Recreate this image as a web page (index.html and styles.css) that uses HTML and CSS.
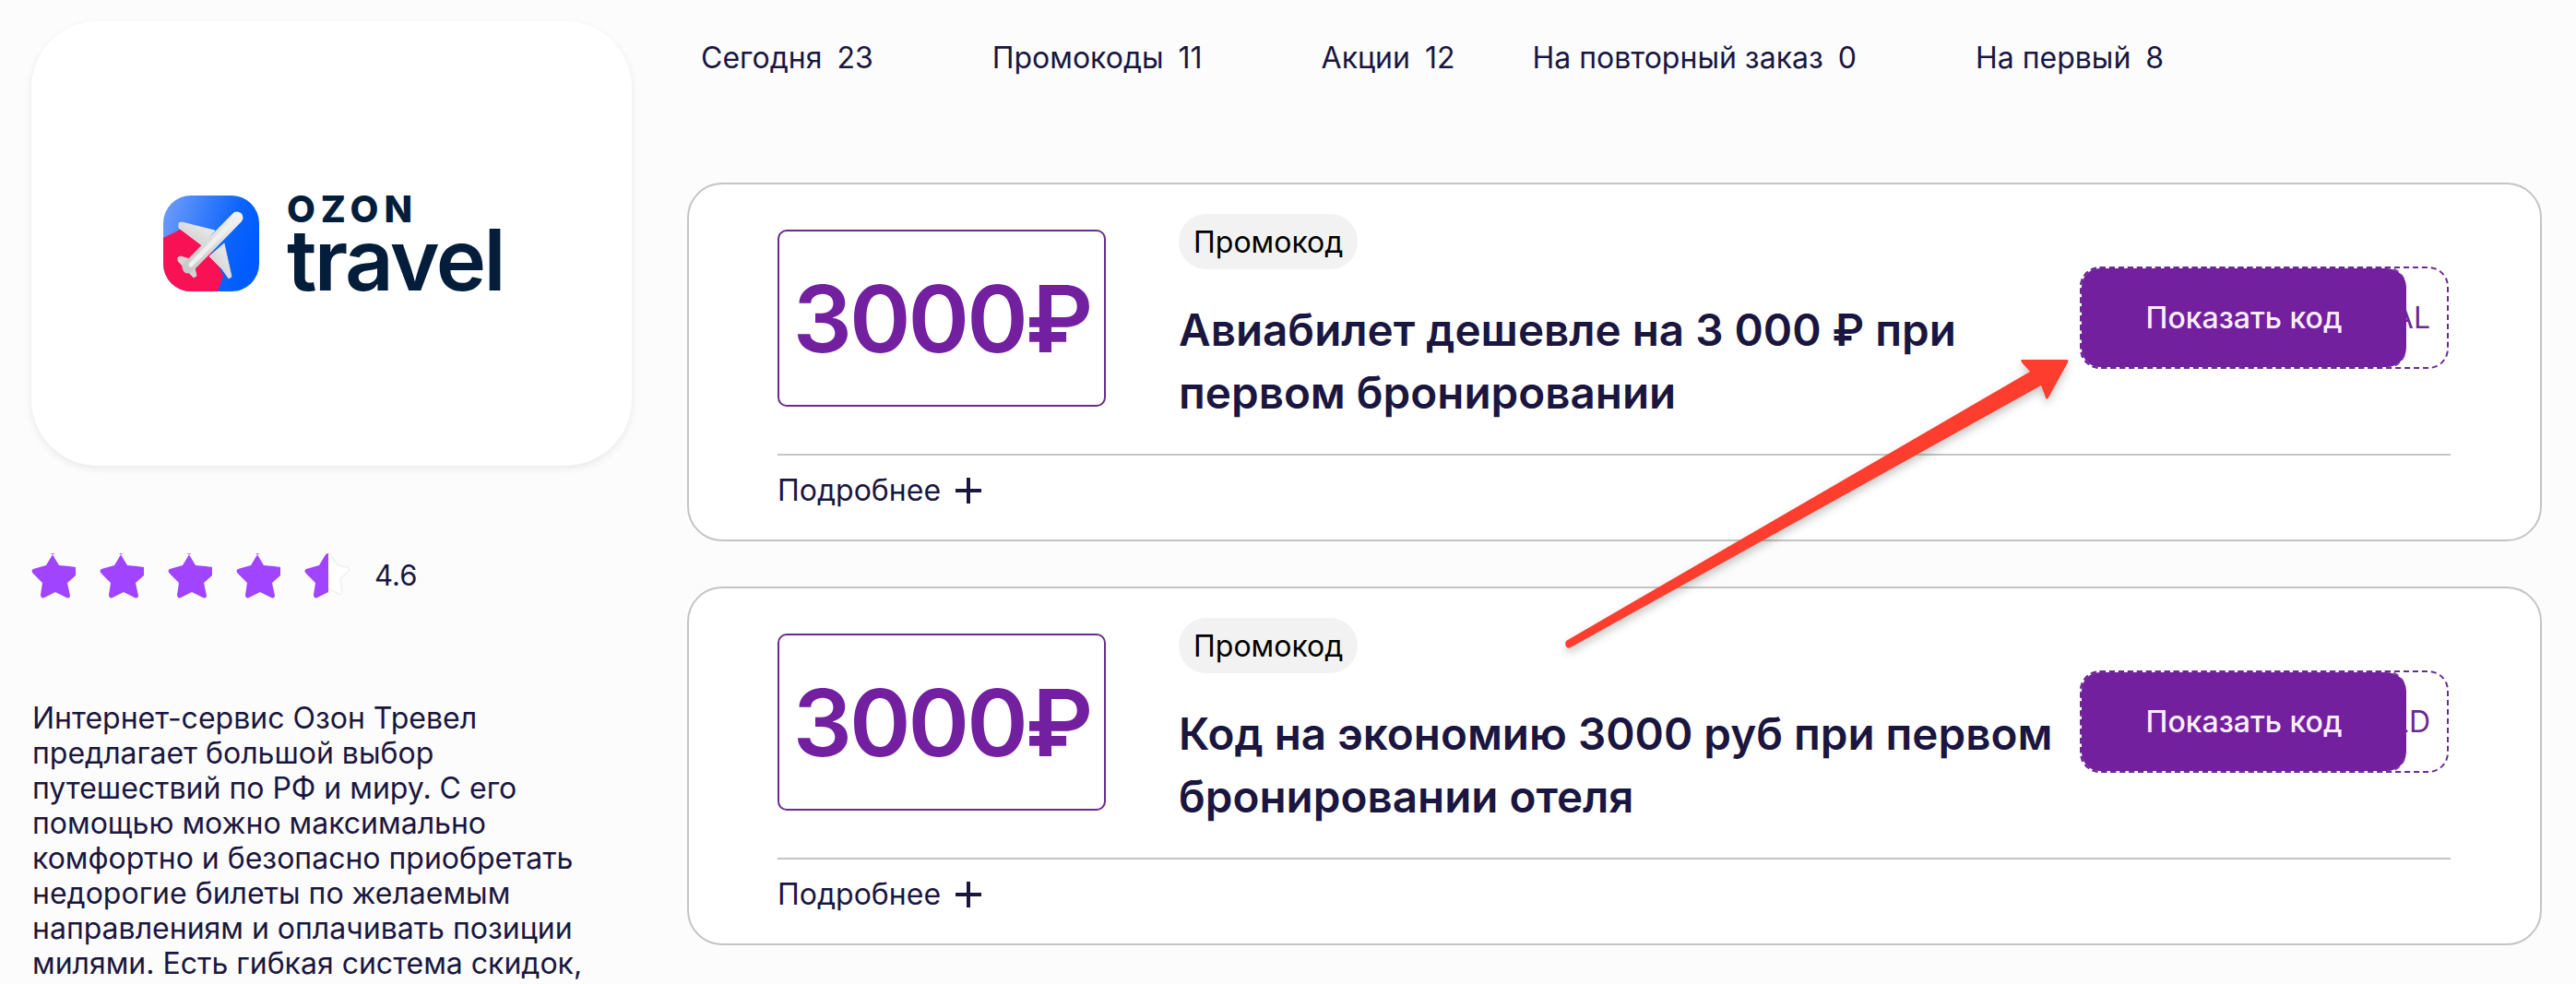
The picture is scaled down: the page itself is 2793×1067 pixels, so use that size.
FILE: index.html
```html
<!DOCTYPE html>
<html lang="ru">
<head>
<meta charset="utf-8">
<title>Ozon Travel</title>
<link rel="stylesheet" href="styles.css">
</head>
<body>
<div class="page">
  <aside class="side">
    <div class="logo-card">
      <div class="logo">
        <svg class="logo-icon" viewBox="0 0 104 104" aria-hidden="true">
          <defs>
            <linearGradient id="bg" x1="0" y1="0.1" x2="1" y2="0.4">
              <stop offset="0" stop-color="#6f9dfa"/>
              <stop offset="0.75" stop-color="#0b63fb"/>
              <stop offset="1" stop-color="#005bff"/>
            </linearGradient>
            <linearGradient id="pl" x1="0" y1="1" x2="1" y2="0">
              <stop offset="0" stop-color="#c9c9c9"/>
              <stop offset="1" stop-color="#f1f1f1"/>
            </linearGradient>
            <clipPath id="sq"><rect width="104" height="104" rx="30"/></clipPath>
          </defs>
          <g clip-path="url(#sq)">
            <rect width="104" height="104" fill="url(#bg)"/>
            <polygon points="0,46 18,37 48,52 65,87 59,104 0,104" fill="#f91155"/>
            <polygon points="17,30 20,29 56,38 42,54 17,35" fill="url(#pl)" stroke="#e4e4e4" stroke-linejoin="round"/>
            <polygon points="50,66 66,52 74,88 71,90 64,80" fill="url(#pl)" stroke="#dcdcdc" stroke-linejoin="round"/>
            <polygon points="16,67 19,66 32,70 36,87 33,89 16,71" fill="#d4d4d4" stroke="#d4d4d4" stroke-linejoin="round"/>
            <line x1="80" y1="24" x2="27" y2="78" stroke="url(#pl)" stroke-width="13" stroke-linecap="round"/>
            <line x1="78" y1="26" x2="30" y2="75" stroke="#efefef" stroke-width="5" stroke-linecap="round"/>
          </g>
        </svg>
        <div class="logo-words">
          <span class="logo-ozon">OZON</span>
          <span class="logo-travel">travel</span>
        </div>
      </div>
    </div>

    <div class="rating">
      <div class="stars">
        <svg class="star" viewBox="0 0 44 48"><path class="star-fill" d="M25 0c-1.500 0-3 1-4 3l-6 10L1 17c-2 1-2 3 0 5l10 10-2 13c0 3 2 4 4 3l12-6 12 6c2 1 4 0 4-2l-3-14 9-8V15l-7-1-11-1-6-10c-1-2-2-3-4-3Z"/></svg>
        <svg class="star" viewBox="0 0 44 48"><path class="star-fill" d="M25 0c-1.500 0-3 1-4 3l-6 10L1 17c-2 1-2 3 0 5l10 10-2 13c0 3 2 4 4 3l12-6 12 6c2 1 4 0 4-2l-3-14 9-8V15l-7-1-11-1-6-10c-1-2-2-3-4-3Z"/></svg>
        <svg class="star" viewBox="0 0 44 48"><path class="star-fill" d="M25 0c-1.500 0-3 1-4 3l-6 10L1 17c-2 1-2 3 0 5l10 10-2 13c0 3 2 4 4 3l12-6 12 6c2 1 4 0 4-2l-3-14 9-8V15l-7-1-11-1-6-10c-1-2-2-3-4-3Z"/></svg>
        <svg class="star" viewBox="0 0 44 48"><path class="star-fill" d="M25 0c-1.500 0-3 1-4 3l-6 10L1 17c-2 1-2 3 0 5l10 10-2 13c0 3 2 4 4 3l12-6 12 6c2 1 4 0 4-2l-3-14 9-8V15l-7-1-11-1-6-10c-1-2-2-3-4-3Z"/></svg>
        <svg class="star" viewBox="0 0 44 48"><path class="star-ghost" d="M25 1c1.500 0 3 1 4 3l6 9 11 2c2 .5 2 3 1 4l-9 9 2 14c0 2-2 3-4 2l-11-6"/><path class="star-fill" d="M25 0c-1.500 0-3 1-4 3l-6 10L1 17c-2 1-2 3 0 5l10 10-2 13c0 3 2 4 4 3l12-6V0Z"/></svg>
      </div>
      <span class="rating-value">4.6</span>
    </div>

    <p class="about">Интернет-сервис Озон Тревел предлагает большой выбор путешествий по РФ и миру. С его помощью можно максимально комфортно и безопасно приобретать недорогие билеты по желаемым направлениям и оплачивать позиции милями. Есть гибкая система скидок,</p>
  </aside>

  <main class="main">
    <nav class="tabs">
      <a class="tab"><span>Сегодня</span><span>23</span></a>
      <a class="tab"><span>Промокоды</span><span>11</span></a>
      <a class="tab tab-short"><span>Акции</span><span>12</span></a>
      <a class="tab"><span>На повторный заказ</span><span>0</span></a>
      <a class="tab"><span>На первый</span><span>8</span></a>
    </nav>

    <article class="card">
      <div class="card-row">
        <div class="value">3000₽</div>
        <div class="info">
          <span class="pill">Промокод</span>
          <h2 class="title">Авиабилет дешевле на 3 000 ₽ при первом бронировании</h2>
        </div>
        <div class="code">
          <span class="code-text">OZONAL</span>
          <button class="show">Показать код</button>
        </div>
      </div>
      <div class="more">
        <span>Подробнее</span>
        <svg class="plus" viewBox="0 0 28 28"><path d="M14 0v28M0 14h28"/></svg>
      </div>
    </article>

    <article class="card">
      <div class="card-row">
        <div class="value">3000₽</div>
        <div class="info">
          <span class="pill">Промокод</span>
          <h2 class="title">Код на экономию 3000 руб при первом бронировании отеля</h2>
        </div>
        <div class="code">
          <span class="code-text">HOTELD</span>
          <button class="show">Показать код</button>
        </div>
      </div>
      <div class="more">
        <span>Подробнее</span>
        <svg class="plus" viewBox="0 0 28 28"><path d="M14 0v28M0 14h28"/></svg>
      </div>
    </article>
  </main>

  <svg class="arrow" viewBox="0 0 570 330" aria-hidden="true">
    <defs>
      <filter id="sh" x="-10%" y="-10%" width="120%" height="130%">
        <feDropShadow dx="0" dy="5" stdDeviation="5" flood-color="#000" flood-opacity="0.22"/>
      </filter>
    </defs>
    <path filter="url(#sh)" d="M5 309 508 17l-9-10c-1-2-1-3 1-3h47c2 0 3 1 2 3l-21 38c-1 2-3 2-3 0l-5-13L10 316c-2 1-4 1-5-1-1-2-1-4 0-6Z" fill="#fd3d2e"/>
  </svg>
</div>
</body>
</html>
```

FILE: styles.css
```css
* { box-sizing: border-box; }
html, body { margin: 0; height: 100%; overflow: hidden; }
body {
  background: #fcfcfc;
  color: #1a1640;
  font-family: "Inter", "Liberation Sans", sans-serif;
}
.page {
  position: relative;
  width: 2793px;
  height: 1067px;
  overflow: hidden;
  display: grid;
  grid-template-columns: 651px 2012px;
  column-gap: 59px;
  padding-left: 34px;
}

/* sidebar */
.side { padding-top: 23px; }
.logo-card {
  height: 482px;
  background: #fff;
  border-radius: 72px;
  box-shadow: 0 3px 8px rgba(0, 0, 0, .08);
  display: flex;
  align-items: center;
  justify-content: center;
}
.logo { display: flex; align-items: flex-start; gap: 30px; margin-left: 4px; margin-top: 2px; }
.logo-icon { width: 104px; height: 104px; display: block; }
.logo-words { display: flex; flex-direction: column; color: #031d3b; }
.logo-ozon {
  font-size: 40px;
  font-weight: 800;
  line-height: 29px;
  letter-spacing: 6px;
}
.logo-travel {
  font-size: 92px;
  font-weight: 600;
  line-height: 72px;
  letter-spacing: -2.5px;
  margin-top: 5px;
}

.rating {
  display: flex;
  align-items: center;
  gap: 30px;
  margin-top: 95px;
  height: 48px;
  padding-left: 1px;
}
.stars { display: flex; gap: 30px; width: 342px; }
.star { width: 44px; height: 48px; display: block; flex: none; overflow: visible; }
.star-fill { fill: #a044ff; }
.star-ghost { fill: #fff; stroke: #f0f0f0; stroke-width: 1.500; }
.rating-value { font-size: 31px; color: #1a1640; margin: 0 0 2px -1px; }

.about {
  margin: 112px 0 0 1px;
  font-size: 32px;
  line-height: 38px;
  color: #1a1640;
  width: 640px;
}

/* main */
.main { display: flex; flex-direction: column; min-width: 0; margin-left: 1px; }
.tabs {
  display: flex;
  gap: 129px;
  padding-left: 15px;
  height: 198px;
  padding-top: 44px;
}
.tab {
  display: flex;
  gap: 16px;
  font-size: 32px;
  line-height: 38px;
  color: #1a1640;
  white-space: nowrap;
}
.tab-short { margin-right: -45px; }

.card {
  height: 389px;
  margin-bottom: 49px;
  padding: 32px 97px 0 96px;
  background: #fff;
  border: 2px solid #c4c4c4;
  border-radius: 38px;
}
.card-row {
  display: flex;
  align-items: flex-start;
  height: 228px;
}
.value {
  flex: none;
  width: 356px;
  height: 192px;
  margin-top: 17px;
  border: 2px solid #6b2a90;
  border-radius: 10px;
  color: #7220a0;
  font-size: 101px;
  font-weight: 600;
  display: flex;
  align-items: center;
  justify-content: center;
  letter-spacing: -3px;
  white-space: nowrap;
}
.info { width: 977px; margin-left: 79px; flex: none; }
.pill {
  display: inline-flex;
  align-items: center;
  height: 60px;
  padding: 0 16px;
  border-radius: 30px;
  background: #f2f2f2;
  color: #000;
  font-size: 32px;
}
.title {
  margin: 32px 0 0;
  font-size: 47.6px;
  line-height: 68px;
  font-weight: 600;
  color: #1a1640;
  width: 960px;
}
.code {
  position: relative;
  flex: none;
  width: 400px;
  height: 111px;
  margin-top: 57px;
  border: 2px dashed #6b2a90;
  border-radius: 22px;
  display: flex;
  align-items: center;
  justify-content: flex-end;
  padding-right: 18px;
  color: #6b2a90;
  font-size: 32px;
}
.show {
  position: absolute;
  left: -2px;
  top: -2px;
  width: 354px;
  height: 111px;
  background: #72209e;
  background-clip: padding-box;
  border: 2px dashed #6b2a90;
  border-right: 0;
  outline: 0;
  border-radius: 22px;
  color: #fbeeff;
  font: 500 32px "Inter", "Liberation Sans", sans-serif;
  padding: 0;
}
.more {
  border-top: 2px solid #c4c4c4;
  margin-top: 32px;
  padding-top: 19px;
  display: flex;
  align-items: center;
  gap: 16px;
  font-size: 32px;
  line-height: 38px;
  color: #1a1640;
}
.plus { width: 28px; height: 28px; fill: none; stroke: #1a1640; stroke-width: 4; }

/* annotation arrow, lying over the cards */
.arrow {
  position: absolute;
  left: 1693px;
  top: 386px;
  width: 570px;
  height: 330px;
  overflow: visible;
  pointer-events: none;
}
```
